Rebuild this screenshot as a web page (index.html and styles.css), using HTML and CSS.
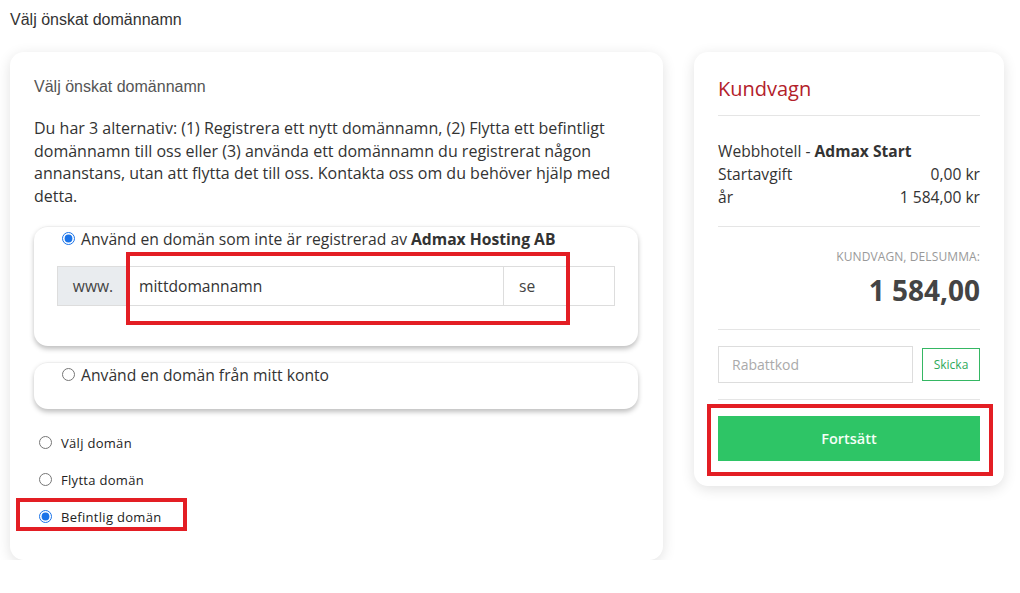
FILE: index.html
```html
<!DOCTYPE html>
<html lang="sv">
<head>
    <meta charset="UTF-8">
    <title>Välj önskat domännamn</title>
    <link rel="stylesheet" href="styles.css">
</head>
<body>
    <div class="page-title">Välj önskat domännamn</div>

    <div class="layout">
        <div class="card domain-card">
            <div class="card-heading">Välj önskat domännamn</div>
            <p class="intro">Du har 3 alternativ: (1) Registrera ett nytt domännamn, (2) Flytta ett befintligt domännamn till oss eller (3) använda ett domännamn du registrerat någon annanstans, utan att flytta det till oss. Kontakta oss om du behöver hjälp med detta.</p>

            <div class="option-box">
                <label class="option-label"><input type="radio" name="owner" checked> Använd en domän som inte är registrerad av <b>Admax Hosting AB</b></label>
                <div class="domain-group">
                    <span class="addon">www.</span>
                    <span class="domain-input">mittdomannamn</span>
                    <span class="tld">se</span>
                    <div class="mark mark-domain"></div>
                </div>
            </div>

            <div class="option-box short">
                <label class="option-label"><input type="radio" name="owner"> Använd en domän från mitt konto</label>
            </div>

            <div class="choices">
                <label class="choice"><input type="radio" name="type"> Välj domän</label>
                <label class="choice"><input type="radio" name="type"> Flytta domän</label>
                <label class="choice"><input type="radio" name="type" checked> Befintlig domän
                    <div class="mark mark-choice"></div>
                </label>
            </div>
        </div>

        <div class="card cart">
            <div class="cart-title">Kundvagn</div>
            <div class="cart-items">
                <div>Webbhotell - <b>Admax Start</b></div>
                <div class="row"><span>Startavgift</span><span>0,00 kr</span></div>
                <div class="row"><span>år</span><span>1 584,00 kr</span></div>
            </div>
            <div class="subtotal">
                <div class="subtotal-label">KUNDVAGN, DELSUMMA:</div>
                <div class="subtotal-sum">1 584,00</div>
            </div>
            <div class="coupon">
                <span class="coupon-input">Rabattkod</span>
                <button class="coupon-btn">Skicka</button>
            </div>
            <div class="continue">
                <button class="continue-btn">Fortsätt</button>
                <div class="mark mark-continue"></div>
            </div>
        </div>
    </div>
</body>
</html>
```

FILE: styles.css
```css
body {
    margin: 0;
    background: #ffffff;
    font-family: 'Liberation Sans', Arial, sans-serif;
    color: #333;
}

.page-title {
    font-size: 16px;
    padding: 11px 0 0 10px;
    height: 30px;
    color: #333;
}

.layout {
    display: flex;
    align-items: flex-start;
    gap: 31px;
    padding: 11px 0 0 10px;
}

.card {
    background: #fff;
    border-radius: 14px;
    box-shadow: 0 3px 14px rgba(0, 0, 0, 0.12);
}

.domain-card {
    width: 653px;
    height: 508px;
    box-sizing: border-box;
    padding: 26px 24px 0 24px;
}

.card-heading {
    font-size: 16px;
    color: #555;
}

.intro {
    font-family: 'Open Sans', sans-serif;
    font-size: 16px;
    line-height: 22.7px;
    margin: 21px 0 18px 0;
    color: #333;
}

input[type="radio"] {
    width: 13px;
    height: 13px;
    margin: 0 6px 0 0;
    accent-color: #1a73e8;
}

.option-box {
    position: relative;
    width: 604px;
    height: 120px;
    box-sizing: border-box;
    border-radius: 14px;
    border-top: 1px solid #eee;
    box-shadow: 0 3px 5px rgba(0, 0, 0, 0.25);
    padding: 1px 23px 0 28px;
    margin-bottom: 16px;
}

.option-box.short {
    height: 47px;
    margin-bottom: 24px;
}

.option-label {
    display: flex;
    align-items: center;
    font-family: 'Open Sans', sans-serif;
    font-size: 15.7px;
    color: #333;
    height: 22px;
}

.option-label b {
    margin-left: 4px;
}

.domain-group {
    position: relative;
    display: flex;
    margin: 16px 0 0 -5px;
    height: 40px;
    width: 558px;
    border: 1px solid #ddd;
    box-sizing: border-box;
    font-family: 'Open Sans', sans-serif;
    font-size: 15.6px;
    color: #333;
}

.addon {
    width: 70px;
    background: #e9ecef;
    display: flex;
    align-items: center;
    justify-content: center;
    color: #444;
}

.domain-input {
    width: 375px;
    display: flex;
    align-items: center;
    padding-left: 10px;
    box-sizing: border-box;
    border-left: 1px solid #ddd;
}

.tld {
    flex: 1;
    display: flex;
    align-items: center;
    padding-left: 15px;
    border-left: 1px solid #ddd;
    color: #444;
}

.choices {
    display: flex;
    flex-direction: column;
    gap: 17px;
    padding-left: 5px;
}

.choice {
    position: relative;
    display: flex;
    align-items: center;
    height: 20px;
    font-family: 'Open Sans', sans-serif;
    font-size: 13px;
    letter-spacing: 0.3px;
    color: #222;
}

.choice input {
    margin-right: 9px;
}

.mark {
    position: absolute;
    border: 4px solid #e31e24;
    box-sizing: border-box;
}

.mark-domain {
    left: 68px;
    top: -15px;
    width: 444px;
    height: 73px;
}

.mark-choice {
    left: -23px;
    top: -9px;
    width: 171px;
    height: 33px;
}

.mark-continue {
    left: -11px;
    top: -12px;
    width: 286px;
    height: 72px;
}

.cart {
    width: 310px;
    box-sizing: border-box;
    padding: 23px 24px 25px 24px;
    font-family: 'Open Sans', sans-serif;
}

.cart-title {
    color: #b3212a;
    font-size: 20px;
    padding-bottom: 13px;
    border-bottom: 1px solid #e5e5e5;
}

.cart-items {
    font-size: 15.6px;
    line-height: 23px;
    padding: 24px 0 17px 0;
    border-bottom: 1px solid #e5e5e5;
}

.row {
    display: flex;
    justify-content: space-between;
}

.subtotal {
    text-align: right;
    padding: 21px 0 20px 0;
    border-bottom: 1px solid #e5e5e5;
}

.subtotal-label {
    font-size: 12px;
    color: #999;
    letter-spacing: 0.1px;
}

.subtotal-sum {
    font-size: 28px;
    font-weight: 700;
    color: #444;
    margin-top: 6px;
}

.coupon {
    display: flex;
    justify-content: space-between;
    align-items: center;
    padding: 16px 0 16px 0;
    border-bottom: 1px solid #e5e5e5;
}

.coupon-input {
    width: 195px;
    height: 37px;
    box-sizing: border-box;
    border: 1px solid #ddd;
    display: flex;
    align-items: center;
    padding-left: 13px;
    color: #aaa;
    font-size: 14px;
}

.coupon-btn {
    width: 58px;
    height: 33px;
    border: 1px solid #35b763;
    background: #fff;
    color: #2eaa5a;
    font-family: 'Open Sans', sans-serif;
    font-size: 12px;
    padding: 0;
}

.continue {
    position: relative;
    margin-top: 16px;
}

.continue-btn {
    width: 100%;
    height: 45px;
    border: none;
    background: #2ec566;
    color: #f4fff7;
    font-family: 'Open Sans', sans-serif;
    font-size: 14.5px;
    font-weight: 600;
}
```
